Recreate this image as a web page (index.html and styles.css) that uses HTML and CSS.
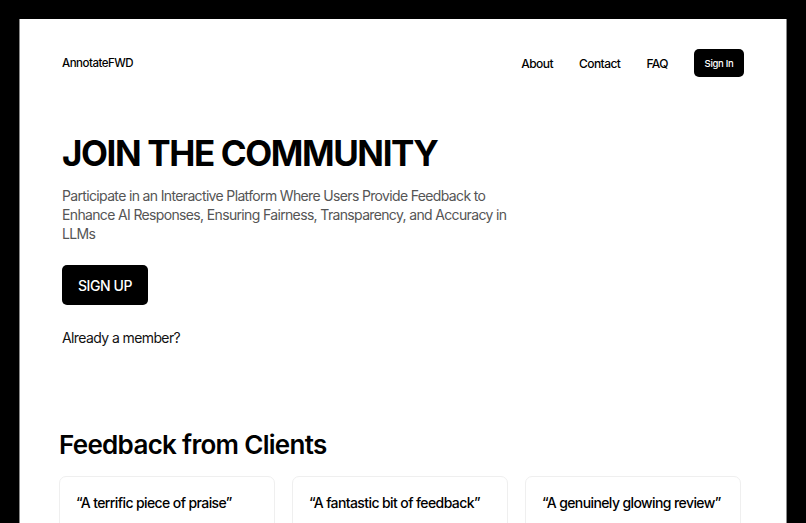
FILE: index.html
```html
<!DOCTYPE html>
<html lang="en">
<head>
<meta charset="utf-8">
<title>AnnotateFWD</title>
<link rel="stylesheet" href="styles.css">
</head>
<body>
<div class="page">
  <header class="header">
    <div class="logo">AnnotateFWD</div>
    <nav class="nav">
      <a class="nav-link" href="#">About</a>
      <a class="nav-link" href="#">Contact</a>
      <a class="nav-link" href="#">FAQ</a>
      <a class="btn-signin" href="#">Sign In</a>
    </nav>
  </header>
  <section class="hero">
    <h1 class="hero-title">JOIN THE COMMUNITY</h1>
    <p class="hero-text">Participate in an Interactive Platform Where Users Provide Feedback to Enhance AI Responses, Ensuring Fairness, Transparency, and Accuracy in LLMs</p>
    <a class="btn-signup" href="#">SIGN UP</a>
    <p class="member">Already a member?</p>
  </section>
  <section class="feedback">
    <h2 class="feedback-title">Feedback from Clients</h2>
    <div class="cards">
      <div class="card">“A terrific piece of praise”</div>
      <div class="card">“A fantastic bit of feedback”</div>
      <div class="card">“A genuinely glowing review”</div>
    </div>
  </section>
</div>
</body>
</html>
```

FILE: styles.css
```css
* { box-sizing: border-box; }
html, body { margin: 0; height: 100%; }
body {
  background: #000;
  padding: 19px 19px 0 19px;
  font-family: Inter, "Noto Sans", sans-serif;
  color: #000;
  overflow: hidden;
}
.page {
  background: #fff;
  min-height: 100%;
  border-left: 1px solid #8a8a8a;
  border-right: 1px solid #8a8a8a;
  padding: 0 42px;
}
a { text-decoration: none; color: inherit; }
.header {
  display: flex;
  align-items: center;
  justify-content: space-between;
  padding-top: 30px;
  height: 58px;
}
.logo { font-size: 11.5px; font-weight: 500; letter-spacing: -0.5px; }
.nav { display: flex; align-items: center; gap: 26px; }
.nav-link { font-size: 12px; font-weight: 500; letter-spacing: -0.55px; }
.btn-signin {
  background: #000;
  color: #fff;
  font-size: 9.5px;
  font-weight: 500;
  letter-spacing: -0.3px;
  width: 50px;
  height: 28px;
  border-radius: 5px;
  display: flex;
  align-items: center;
  justify-content: center;
}
.hero { padding-top: 52px; }
.hero-title {
  margin: 0;
  font-size: 35px;
  line-height: 48px;
  font-weight: 700;
  letter-spacing: -1.4px;
}
.hero-text {
  margin: 9px 0 0 0;
  max-width: 452px;
  font-size: 14px;
  line-height: 19px;
  color: #555;
  letter-spacing: -0.65px;
}
.btn-signup {
  display: inline-flex;
  align-items: center;
  justify-content: center;
  margin-top: 22px;
  width: 86px;
  height: 40px;
  background: #000;
  color: #fff;
  font-size: 14px;
  font-weight: 500;
  letter-spacing: -0.4px;
  border-radius: 5px;
}
.member {
  margin: 23px 0 0 0;
  font-size: 14px;
  line-height: 19px;
  color: #111;
  letter-spacing: -0.6px;
}
.feedback { margin-top: 82px; margin-left: -3px; }
.feedback-title {
  margin: 0;
  font-size: 26px;
  line-height: 32px;
  font-weight: 600;
  letter-spacing: -0.7px;
}
.cards {
  display: grid;
  grid-template-columns: repeat(3, 216px);
  gap: 17px;
  margin-top: 15px;
}
.card {
  border: 1px solid #efefef;
  border-radius: 7px;
  padding: 17px 16px;
  height: 80px;
  font-size: 14px;
  font-weight: 500;
  letter-spacing: -0.6px;
}
```
